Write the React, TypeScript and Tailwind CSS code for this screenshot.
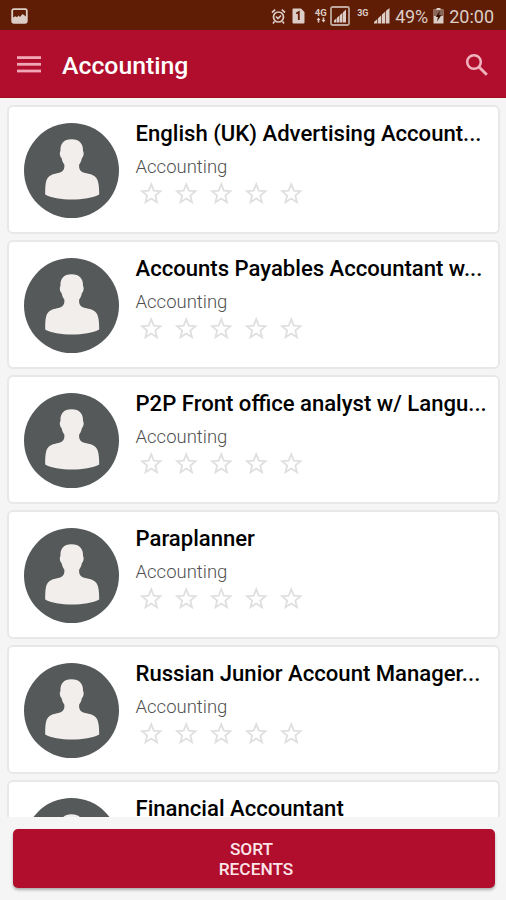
import React from 'react';

const jobs = [
  { id: 1, title: 'English (UK) Advertising Account...', category: 'Accounting' },
  { id: 2, title: 'Accounts Payables Accountant w...', category: 'Accounting' },
  { id: 3, title: 'P2P Front office analyst w/ Langu...', category: 'Accounting' },
  { id: 4, title: 'Paraplanner', category: 'Accounting' },
  { id: 5, title: 'Russian Junior Account Manager...', category: 'Accounting' },
  { id: 6, title: 'Financial Accountant', category: 'Accounting' },
];

function StatusBar() {
  return (
    <div className="h-[30px] shrink-0 bg-[#5f1d05] text-[#dccdc6] flex items-center justify-between pl-[11px] pr-[12px] pt-[2px]">
      <svg width="17" height="16" viewBox="0 0 17 16">
        <rect x="1.2" y="1.2" width="14.6" height="13.6" rx="1.5" fill="none" stroke="currentColor" strokeWidth="1.8" />
        <path d="M2 14V9.5l2.5-1.2 1.5 1L7.5 7.5 9 9l2.5-3L15 8.5V14z" fill="currentColor" />
      </svg>
      <div className="flex items-center">
        <svg width="15" height="17" viewBox="0 0 15 17" fill="none" stroke="currentColor" strokeWidth="1.7">
          <circle cx="7.5" cy="9" r="5" />
          <path d="M1 4.5l3.2-2.8M14 4.5l-3.2-2.8M5 8.5l2 2 3-3M3.5 13.5l-1.5 2M11.5 13.5l1.5 2" />
        </svg>
        <svg className="ml-[6px]" width="13" height="16" viewBox="0 0 13 16">
          <path d="M1 .5h8l3.5 3.5v10.5a1 1 0 0 1-1 1h-10a1 1 0 0 1-1-1v-13a1 1 0 0 1 .5-1z" fill="currentColor" />
          <path d="M4.2 5.5l2.6-1.5v8" fill="none" stroke="#5f1d05" strokeWidth="1.8" />
        </svg>
        <div className="ml-[9px] w-[13px] flex flex-col items-center">
          <span className="text-[9.5px] leading-[8px] font-bold">4G</span>
          <svg width="10" height="6" viewBox="0 0 10 6" fill="currentColor">
            <path d="M.5 3L2.5 .5l2 2.5H3.3V5.500H1.700V3zM5.500 3h1.200V.5h1.600V3h1.200l-2 2.500z" />
          </svg>
        </div>
        <svg className="ml-[3px]" width="20" height="20" viewBox="0 0 20 20">
          <rect x="1" y="1" width="18" height="18" rx="1.5" fill="none" stroke="#bfa79d" strokeWidth="1.8" />
          <path d="M4 16.5v-2l2.5-2.3v4.3zM7 16.5v-4.700l2.500-2.300v7zM10 16.500V9l2.500-2.300v9.800zM13 16.500V6.200L16 3.500v13z" fill="currentColor" />
        </svg>
        <span className="ml-[7px] w-[11px] mb-[6px] text-[9px] leading-[8px] font-bold whitespace-nowrap">3G</span>
        <svg className="ml-[6px]" width="16" height="16" viewBox="0 0 16 16">
          <path d="M0 15.5v-1.500l3.300-3v4.500zM4 15.500v-5.200l3.300-3v8.200zM8 15.500V6.500l3.300-3v12zM12 15.500V2.800L15.500 0v15.500z" fill="currentColor" />
        </svg>
        <span className="ml-[5px] w-[34px] text-[18px] leading-none tracking-[-0.2px] whitespace-nowrap mt-[2px]">49%</span>
        <svg className="ml-[4px]" width="11" height="16" viewBox="0 0 11 16">
          <path d="M3.5 0h4v1.5h3v14H.5v-14h3z" fill="currentColor" />
          <path d="M.5 2h10v6H.5z" fill="#8a6658" />
          <path d="M7 2.5L2.8 9H5l-1 4.5L8.5 7H6z" fill="#351003" />
        </svg>
        <span className="ml-[5px] mt-[2px] text-[18px] leading-none">20:00</span>
      </div>
    </div>
  );
}

function Header() {
  return (
    <header className="h-[68px] shrink-0 bg-[#b00e2c] border-b border-[#a3101f] flex items-center px-[17px]">
      <button type="button" aria-label="Menu" className="mt-[2px]">
        <svg width="24" height="17" viewBox="0 0 24 17" fill="#f0a6b4">
          <rect y="0.2" width="24" height="2.8" />
          <rect y="6.9" width="24" height="2.8" />
          <rect y="13.6" width="24" height="2.8" />
        </svg>
      </button>
      <h1 className="ml-[21px] mt-[5px] text-[24.8px] leading-none font-medium text-white">Accounting</h1>
      <button type="button" aria-label="Search" className="ml-auto mt-[2px]">
        <svg width="24" height="24" viewBox="0 0 24 24" fill="none" stroke="#f0b3bd" strokeWidth="2.5">
          <circle cx="9" cy="9" r="6.8" />
          <path d="M14 14l7.8 7.8" strokeWidth="2.9" />
        </svg>
      </button>
    </header>
  );
}

function Avatar() {
  return (
    <svg className="shrink-0" width="95" height="95" viewBox="0 0 95 95">
      <circle cx="47.5" cy="47.5" r="47.5" fill="#55595a" />
      <path
        d="M47.5 16.3C39.5 16.3 36 21 36.5 28C35.200 29.500 36 34 37.600 35C38 38 39.200 40 40.300 41.500C40.800 45.500 39.500 48.200 36 49.500C32 50.800 27.500 51 24.500 54C21.500 57 21.200 63 21.200 71.500C27 75 37 76.500 47.900 76.500C58.700 76.500 69 75 75.200 71.500C75.200 63 74.500 57 71.500 54C68.500 51 63.500 50.800 59.500 49.500C56 48.200 54.700 45.500 55.200 41.500C56.300 40 57.500 38 57.900 35C59.500 34 60.300 29.500 59 28C59.500 21 55.500 16.300 47.500 16.300Z"
        fill="#f1eeeb"
      />
    </svg>
  );
}

function Stars() {
  return (
    <div className="flex gap-[8.6px] ml-[2px] mt-[2px]">
      {[1, 2, 3, 4, 5].map((n) => (
        <svg key={n} width="26.5" height="26.5" viewBox="0 0 24 24" fill="none" stroke="#dfdfdf" strokeWidth="1.6">
          <path d="M12 3.7l2.3 5.9 6.1.5-4.7 4 1.5 6L12 16.700 6.800 20.100l1.500-6-4.700-4 6.100-.5z" />
        </svg>
      ))}
    </div>
  );
}

function JobCard({ title, category }: { title: string; category: string }) {
  return (
    <li className="h-[129px] shrink-0 flex bg-white border-2 border-[#e8e8e8] rounded-[6px] pl-[14.5px] pt-[16px]">
      <Avatar />
      <div className="ml-[17px] min-w-0">
        <h2 className="text-[22.1px] leading-[26px] -mt-[3px] font-medium text-black whitespace-nowrap">{title}</h2>
        <p className="mt-[10px] text-[18.5px] leading-[22px] font-light text-[#505050]">{category}</p>
        <Stars />
      </div>
    </li>
  );
}

export default function App() {
  return (
    <div className="w-full h-screen flex flex-col overflow-hidden bg-[#f5f5f5] font-[Roboto,sans-serif]">
      <StatusBar />
      <Header />
      <ul className="h-[719px] shrink-0 overflow-hidden flex flex-col gap-[6px] pt-[7px] pl-[7px] pr-[6px]">
        {jobs.map((job) => (
          <JobCard key={job.id} title={job.title} category={job.category} />
        ))}
      </ul>
      <div className="pt-[12px] pl-[13px] pr-[11px]">
        <button
          type="button"
          className="w-full h-[59px] flex flex-col items-center justify-center pt-px rounded-[5px] bg-[#b00e2c] shadow-[0_2px_3px_rgba(0,0,0,0.3)] text-[17.3px] leading-[20px] font-medium text-[#fbe4e8]"
        >
          <span className="pr-[5px]">SORT</span>
          <span className="ml-[4px]">RECENTS</span>
        </button>
      </div>
    </div>
  );
}
